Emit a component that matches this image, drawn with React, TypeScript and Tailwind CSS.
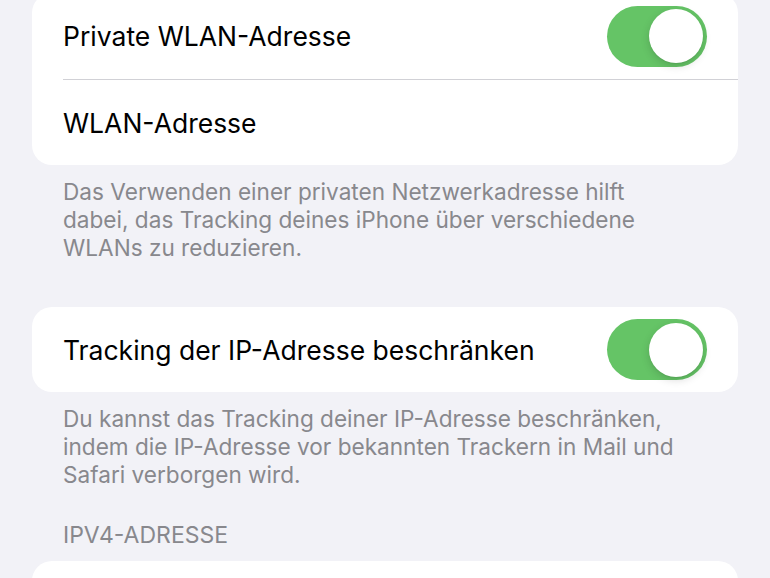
import React from "react";

function Toggle() {
  return (
    <div className="relative h-[61px] w-[100px] shrink-0 rounded-full bg-[#65c466]">
      <div className="absolute right-[4px] top-[3.5px] h-[54px] w-[54px] rounded-full bg-white shadow-[0_3px_8px_rgba(0,0,0,0.15),0_1px_1px_rgba(0,0,0,0.06)]" />
    </div>
  );
}

export default function App() {
  return (
    <div
      className="h-[578px] w-[770px] overflow-hidden bg-[#f2f2f7] px-[32px]"
      style={{ fontFamily: "Inter, 'Noto Sans', sans-serif" }}
    >
      <div className="-mt-[7px] rounded-[20px] bg-white">
        <div className="flex h-[86px] items-center justify-between pl-[31px] pr-[31px]">
          <span className="pt-[2px] text-[26.5px] text-black">Private WLAN-Adresse</span>
          <Toggle />
        </div>
        <div className="ml-[31px] h-px bg-[#d1d1d6]" />
        <div className="flex h-[85px] items-center pl-[31px]">
          <span className="pt-[2px] text-[26.5px] text-black">WLAN-Adresse</span>
        </div>
      </div>
      <p className="px-[31px] pt-[13px] text-[22.6px] leading-[28px] text-[#88888d]">
        Das Verwenden einer privaten Netzwerkadresse hilft
        <br />
        dabei, das Tracking deines iPhone über verschiedene
        <br />
        WLANs zu reduzieren.
      </p>
      <div className="mt-[45px] rounded-[20px] bg-white">
        <div className="flex h-[85px] items-center justify-between pl-[31px] pr-[31px]">
          <span className="pt-[2px] text-[26.5px] text-black">Tracking der IP-Adresse beschränken</span>
          <Toggle />
        </div>
      </div>
      <p className="px-[31px] pt-[13px] text-[22.6px] leading-[28px] text-[#88888d]">
        Du kannst das Tracking deiner IP-Adresse beschränken,
        <br />
        indem die IP-Adresse vor bekannten Trackern in Mail und
        <br />
        Safari verborgen wird.
      </p>
      <p className="mt-[32px] px-[31px] text-[23px] leading-[28px] text-[#88888d]">IPV4-ADRESSE</p>
      <div className="mt-[12px] h-[80px] rounded-[20px] bg-white" />
    </div>
  );
}
